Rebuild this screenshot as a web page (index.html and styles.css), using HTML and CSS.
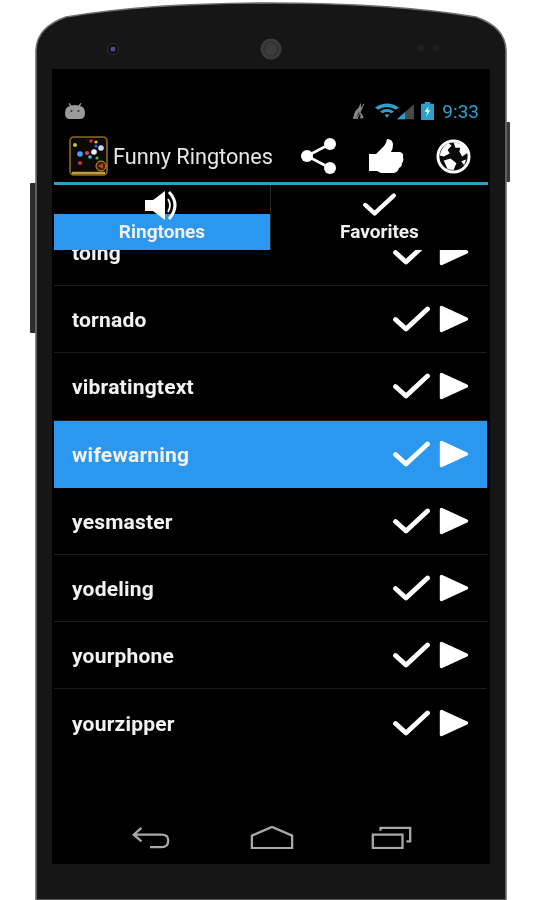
FILE: index.html
```html
<!DOCTYPE html>
<html lang="en">
<head>
  <meta charset="UTF-8">
  <title>Funny Ringtones</title>
  <link rel="stylesheet" href="styles.css">
</head>
<body>

<svg width="0" height="0" class="defs">
  <symbol id="check" viewBox="0 0 37 26">
    <path d="M2.5 13.5 L13 23 L34.5 3" fill="none" stroke="#fff" stroke-width="4.8" stroke-linecap="round" stroke-linejoin="round"/>
  </symbol>
  <symbol id="play" viewBox="0 0 30 28">
    <path d="M2.5 2.5 L27.5 14 L2.5 25.5 Z" fill="#fff" stroke="#fff" stroke-width="3.4" stroke-linejoin="round"/>
  </symbol>
</svg>

<div class="phone">
  <!-- device shell -->
  <svg class="shell" width="540" height="900" viewBox="0 0 540 900">
    <rect x="505" y="122" width="5" height="60" rx="1" fill="#3a3a3a"/>
    <rect x="30" y="183" width="7" height="150" rx="1" fill="#2e2e2e"/>
    <path d="M36 900 L36 50 Q37 27 66 17 Q150 3 271 3 Q392 3 476 17 Q505 27 506 50 L506 900 Z" fill="#161616" stroke="#6e6e6e" stroke-width="1.6"/>
    <circle cx="113" cy="49" r="5.5" fill="#0b0b12" stroke="#333" stroke-width="1"/>
    <circle cx="113" cy="49" r="2.6" fill="#4a4a8c"/>
    <circle cx="271" cy="49" r="10.5" fill="#3c3c3c"/>
    <circle cx="271" cy="49" r="7" fill="none" stroke="#2a2a2a" stroke-width="2" stroke-dasharray="1.5 1.5"/>
    <circle cx="421" cy="48" r="3.5" fill="#1f1f1f"/>
    <circle cx="436" cy="48" r="3" fill="#1f1f1f"/>
  </svg>

  <div class="screen">
    <div class="status">
      <svg class="android" width="22" height="17" viewBox="0 0 22 17">
        <path d="M1 10 Q1 4 6 3 L4.5 0.5 L5.5 0 L7.5 2.6 Q11 1.6 14.5 2.6 L16.5 0 L17.5 0.5 L16 3 Q21 4 21 10 Q21 16 16 16 L6 16 Q1 16 1 10 Z" fill="#9a9a9a"/>
        <circle cx="7.5" cy="8" r="1" fill="#333"/>
        <circle cx="14.5" cy="8" r="1" fill="#333"/>
      </svg>
      <div class="status-right">
        <svg width="16" height="17" viewBox="0 0 15 19" class="mute">
          <path d="M9 2 L10 7 L6 11 L4 17 L1.5 17 L3.5 10 L8 5 Z M13 1 L5 18 M9 11 L12 16 L9 17" fill="#8a8a8a" stroke="#8a8a8a" stroke-width="1.2"/>
        </svg>
        <svg width="40" height="18" viewBox="0 0 40 23" preserveAspectRatio="none" class="signal">
          <path d="M0 7 Q12 -3 24 7 L21 10 Q12 3 3 10 Z M5 12 Q12 6 19 12 L16.5 14.5 Q12 11 7.5 14.5 Z M9.5 16.5 Q12 14.5 14.5 16.5 L12 20 Z" fill="#2c9fca"/>
          <path d="M22 22 L39 3 L39 22 Z" fill="#4a4a4a"/>
          <path d="M22 22 L30 13 L30 22 Z" fill="#2c9fca"/>
        </svg>
        <svg width="13" height="18" viewBox="0 0 14 22" preserveAspectRatio="none" class="battery">
          <path d="M4 0 H10 V2 H14 V22 H0 V2 H4 Z" fill="#2c9fca"/>
          <path d="M8.5 5 L4 12 H7 L5.5 18 L10 10 H7 Z" fill="#fff"/>
        </svg>
        <span class="time">9:33</span>
      </div>
    </div>

    <div class="actionbar">
      <svg class="appicon" width="39" height="40" viewBox="0 0 39 40">
        <rect x="1" y="1" width="37" height="38" rx="4" fill="#0c0a08" stroke="#8a6a24" stroke-width="1.6"/>
        <path d="M3 37 H36" stroke="#c79a3a" stroke-width="2.4"/>
        <circle cx="6" cy="9" r="2" fill="#b8c840"/>
        <circle cx="22" cy="5" r="1.8" fill="#d83030"/>
        <circle cx="27" cy="6" r="1.6" fill="#d8c040"/>
        <circle cx="11" cy="18" r="2.8" fill="#4aa0ff"/>
        <circle cx="18" cy="17" r="2" fill="#e04060"/>
        <circle cx="25" cy="16" r="2.8" fill="#f0f4ff"/>
        <circle cx="32" cy="12" r="2.8" fill="#c8d8ff"/>
        <circle cx="27" cy="10" r="1.6" fill="#3060e0"/>
        <circle cx="21" cy="21" r="1.8" fill="#40c0e0"/>
        <circle cx="28" cy="22" r="1.6" fill="#40c050"/>
        <circle cx="11" cy="27" r="2" fill="#d03030"/>
        <circle cx="32" cy="30" r="5" fill="#3a2408" stroke="#c79a3a"/>
        <path d="M29 30 L34 27.5 V32.5 Z" fill="#d04020"/>
      </svg>
      <span class="title">Funny Ringtones</span>
      <div class="actions">
        <svg width="37" height="38" viewBox="0 0 37 38">
          <path d="M30 7 L7 19 L30 31" fill="none" stroke="#fff" stroke-width="2.6"/>
          <circle cx="30" cy="7" r="6" fill="#fff"/>
          <circle cx="7" cy="19" r="6" fill="#fff"/>
          <circle cx="30" cy="31" r="6" fill="#fff"/>
        </svg>
        <svg width="35" height="35" viewBox="0 0 35 35">
          <path d="M0 15 H7 L13 9 Q17 6 18 0 Q24 0 24 6 Q24 10 22 13 H31 Q35 14 34 18 Q35 22 33 24 Q33 28 30 29 Q29 33 25 34 H12 L8 32 H0 Z" fill="#fff"/>
        </svg>
        <svg width="35" height="35" viewBox="0 0 36 36">
          <circle cx="18" cy="18" r="16" fill="#0a0a0a" stroke="#fff" stroke-width="3"/>
          <path d="M4 17 Q5 8 13 4 L16 7 L12 11 L14 15 L8 18 Z M18 3 L28 6 L33 14 L27 18 L24 13 L25 9 L20 9 Z M8 22 L15 20 L21 25 L18 32 L12 31 Z M26 23 L31 21 L29 27 Z" fill="#fff"/>
        </svg>
      </div>
    </div>

    <div class="tabs">
      <div class="tab tab-on">
        <svg class="speaker" width="35" height="33" viewBox="0 0 35 33">
          <path d="M1 11 H9 L21 2 V31 L9 22 H1 Z" fill="#fff"/>
          <path d="M25 3 Q37 16 25 30" fill="none" stroke="#fff" stroke-width="3"/>
          <path d="M24 10 Q28 16 24 23" fill="none" stroke="#fff" stroke-width="1.8"/>
        </svg>
        <span class="tab-label">Ringtones</span>
      </div>
      <div class="tab">
        <svg class="fav-check" width="33" height="25"><use href="#check"/></svg>
        <span class="tab-label">Favorites</span>
      </div>
    </div>

    <ul class="list">
      <li class="row"><span>toing</span><svg width="37" height="26"><use href="#check"/></svg><svg width="30" height="28"><use href="#play"/></svg></li>
      <li class="row"><span>tornado</span><svg width="37" height="26"><use href="#check"/></svg><svg width="30" height="28"><use href="#play"/></svg></li>
      <li class="row"><span>vibratingtext</span><svg width="37" height="26"><use href="#check"/></svg><svg width="30" height="28"><use href="#play"/></svg></li>
      <li class="row row-on"><span>wifewarning</span><svg width="37" height="26"><use href="#check"/></svg><svg width="30" height="28"><use href="#play"/></svg></li>
      <li class="row"><span>yesmaster</span><svg width="37" height="26"><use href="#check"/></svg><svg width="30" height="28"><use href="#play"/></svg></li>
      <li class="row"><span>yodeling</span><svg width="37" height="26"><use href="#check"/></svg><svg width="30" height="28"><use href="#play"/></svg></li>
      <li class="row"><span>yourphone</span><svg width="37" height="26"><use href="#check"/></svg><svg width="30" height="28"><use href="#play"/></svg></li>
      <li class="row row-last"><span>yourzipper</span><svg width="37" height="26"><use href="#check"/></svg><svg width="30" height="28"><use href="#play"/></svg></li>
    </ul>

    <div class="navbar">
      <svg width="42" height="23" viewBox="0 0 40 24">
        <path d="M10 2 L2 9 L10 16 M2 9 H31 Q38 9 38 15 Q38 22 31 22 H19" fill="none" stroke="#a8a8a8" stroke-width="2.4"/>
      </svg>
      <svg width="44" height="23" viewBox="0 0 44 24">
        <path d="M1 10 L22 1 L43 10 V23 H1 Z" fill="none" stroke="#a8a8a8" stroke-width="2.4"/>
      </svg>
      <svg width="41" height="23" viewBox="0 0 41 24">
        <rect x="1" y="9" width="31" height="14" fill="none" stroke="#a8a8a8" stroke-width="2.4"/>
        <path d="M9 5 V2 H40 V16 H36" fill="none" stroke="#a8a8a8" stroke-width="2.4"/>
      </svg>
    </div>
  </div>
</div>

</body>
</html>
```

FILE: styles.css
```css
* { box-sizing: border-box; margin: 0; padding: 0; }
html, body { height: 100%; overflow: hidden; }
body {
  background: #fff;
  font-family: 'Roboto', sans-serif;
  color: #fff;
}
.defs { position: absolute; }

.phone {
  width: 540px;
  height: 900px;
  padding: 69px 50px 0 52px;
  filter: blur(0.6px);
}
.shell {
  position: absolute;
  left: 0;
  top: 0;
}
.screen {
  position: relative;
  height: 795px;
  background: #000;
  display: flex;
  flex-direction: column;
}

.status {
  height: 64px;
  padding: 20px 11px 0 12px;
  display: flex;
  justify-content: space-between;
  align-items: center;
}
.status-right {
  display: flex;
  align-items: center;
}
.mute { margin-right: 8px; }
.signal { margin-right: 6px; }
.battery { margin-right: 8px; }
.time {
  font-size: 19px;
  color: #2c9fca;
}

.actionbar {
  height: 49px;
  padding: 0 19px 3px 17px;
  display: flex;
  align-items: center;
}
.title {
  font-size: 21.7px;
  margin-left: 5px;
  color: #e6e6e6;
  flex: 1;
}
.actions {
  display: flex;
  align-items: center;
  gap: 32px;
}

.tabs {
  height: 68px;
  margin: 0 2px;
  border-top: 3px solid #2c9fca;
  display: flex;
  position: relative;
  z-index: 1;
  background: #000;
}
.tab {
  flex: 1;
  position: relative;
  display: flex;
  flex-direction: column;
  align-items: center;
  justify-content: flex-end;
}
.tab-on {
  flex: none;
  width: 217px;
  border-right: 1px solid #2a2a2a;
  background: linear-gradient(#000 29px, #2b97ee 29px);
}
.tab-label {
  font-size: 19px;
  font-weight: 700;
  height: 35px;
  line-height: 34px;
  color: #f0f0f0;
}
.speaker {
  position: absolute;
  top: 4px;
  left: 90px;
}
.fav-check { margin-bottom: -2px; }

.list {
  list-style: none;
  flex: 1;
  margin: -31px 3px 0 2px;
}
.row {
  height: 67.2px;
  padding: 0 18px;
  display: flex;
  align-items: center;
  border-bottom: 1px solid #1d1d1d;
  font-size: 21px;
  font-weight: 700;
  letter-spacing: 0.2px;
  color: #f2f2f2;
}
.row span { flex: 1; padding-top: 2px; }
.row svg + svg { margin-left: 9px; }
.row-on { background: #2b97ee; border-bottom-color: #2b97ee; }
.row-last { border-bottom: 0; }

.navbar {
  height: 56px;
  padding: 18px 78px 0 78px;
  display: flex;
  justify-content: space-between;
  align-items: flex-start;
}
```
